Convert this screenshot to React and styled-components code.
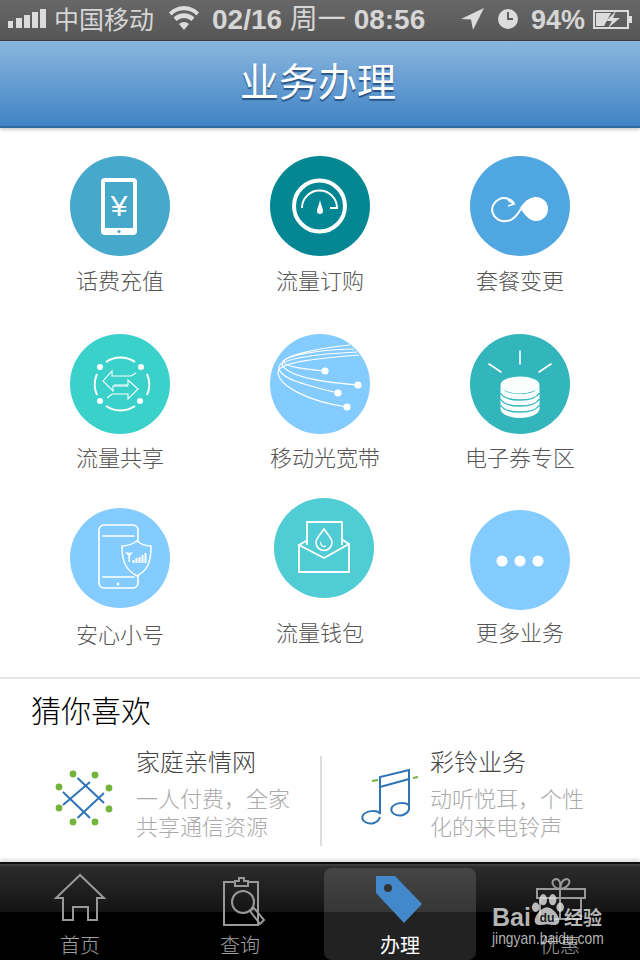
import React from "react";
import styled, { createGlobalStyle } from "styled-components";

const GlobalStyle = createGlobalStyle`
  html, body { margin: 0; padding: 0; background: #fff; }
  body { font-family: "Liberation Sans", "Noto Sans CJK SC", sans-serif; }
`;

const Phone = styled.div`
  width: 640px;
  height: 960px;
  display: flex;
  flex-direction: column;
  overflow: hidden;
  position: relative;
  background: #fff;
`;

const StatusBar = styled.div`
  height: 40px;
  flex: none;
  display: flex;
  align-items: center;
  box-sizing: border-box;
  padding-left: 8px;
  background: linear-gradient(#676767, #565656);
  color: #d6d6d6;
  font-size: 26px;
  white-space: nowrap;
`;

const StatusText = styled.span`
  margin-left: ${(p) => p.$left || 0}px;
  width: ${(p) => p.$width}px;
  font-size: ${(p) => p.$size || 25}px;
  font-weight: ${(p) => p.$weight || 400};
  line-height: 40px;
`;

const StatusWeekday = styled.span`
  font-weight: 400;
`;

const StatusIcon = styled.svg`
  flex: none;
  margin-left: ${(p) => p.$left || 0}px;
  fill: #dcdcdc;
`;

const Header = styled.header`
  height: 88px;
  flex: none;
  box-sizing: border-box;
  display: flex;
  align-items: center;
  justify-content: center;
  padding: 0 4px 2px 0;
  background: linear-gradient(#8ab6de, #4083c5);
  border-top: 1px solid #3d3d3d;
  border-bottom: 2px solid #2f6aa3;
  box-shadow: 0 2px 3px rgba(0, 0, 0, 0.2);
  position: relative;
  color: #fff;
  font-size: 39px;
  line-height: 46px;
  text-shadow: 0 2px 1px rgba(20, 60, 110, 0.75);
`;

const Services = styled.section`
  display: grid;
  grid-template-columns: 200px 200px 200px;
  grid-template-rows: 178px 178px 193px;
  padding: 0 20px;
  flex: none;
`;

const Service = styled.div`
  display: flex;
  flex-direction: column;
  align-items: center;
  padding-top: ${(p) => p.$top}px;
`;

const Disc = styled.svg`
  width: 100px;
  height: 100px;
  flex: none;
  margin-left: ${(p) => p.$shift || 0}px;
`;

const ServiceName = styled.div`
  margin-top: ${(p) => p.$gap}px;
  margin-left: ${(p) => p.$shift || 0}px;
  font-size: 22px;
  font-weight: 300;
  line-height: 30px;
  color: #555;
`;

const Recommend = styled.section`
  flex: 1;
  border-top: 2px solid #e6e6e6;
`;

const RecommendTitle = styled.h2`
  margin: 13px 0 0 31px;
  font-size: 30px;
  line-height: 40px;
  font-weight: 300;
  color: #000;
`;

const RecommendRow = styled.div`
  display: grid;
  grid-template-columns: 320px 2px 1fr;
  margin-top: 17px;
`;

const Pick = styled.div`
  display: flex;
`;

const PickIcon = styled.svg`
  flex: none;
  width: ${(p) => p.$width}px;
  height: 100px;
`;

const PickTitle = styled.div`
  font-size: 24px;
  font-weight: 300;
  line-height: 28px;
  color: #444;
`;

const PickDesc = styled.div`
  margin-top: 9px;
  width: 156px;
  font-size: 22px;
  font-weight: 300;
  line-height: 28px;
  color: #aaa;
`;

const PickDivider = styled.div`
  margin-top: 7px;
  height: 90px;
  background: #ddd;
`;

const TabBar = styled.nav`
  height: 98px;
  flex: none;
  box-sizing: border-box;
  display: grid;
  grid-template-columns: repeat(4, 160px);
  border-top: 2px solid #0c0c0c;
  box-shadow: 0 -3px 3px rgba(0, 0, 0, 0.12);
  background: linear-gradient(#454545 0, #2b2b2b 3px, #141414 48px, #000 48px);
  position: relative;
`;

const Tab = styled.div`
  display: flex;
  flex-direction: column;
  align-items: center;
  margin: 4px 4px 4px;
  border-radius: 8px;
  background: ${(p) =>
    p.$active ? "linear-gradient(#454545 0, #363636 44px, #222 44px)" : "transparent"};
`;

const TabIcon = styled.svg`
  width: 152px;
  height: 60px;
  flex: none;
  fill: none;
  stroke: #999;
  stroke-width: 2;
`;

const TabLabel = styled.span`
  font-size: 20px;
  font-weight: ${(p) => (p.$active ? 400 : 300)};
  line-height: 28px;
  margin-top: 4px;
  color: ${(p) => (p.$active ? "#fff" : "#a0a0a0")};
`;

const Watermark = styled.div`
  position: absolute;
  left: 490px;
  top: 893px;
  width: 120px;
  height: 60px;
  color: rgba(222, 222, 222, 0.82);
`;

const WatermarkLogo = styled.div`
  display: flex;
  align-items: center;
  height: 36px;
`;

const WatermarkBai = styled.span`
  margin: 11px 0 0 2px;
  width: 38px;
  font-size: 25px;
  font-weight: 700;
  line-height: 30px;
`;

const WatermarkCn = styled.span`
  margin: 15px 0 0 0;
  font-size: 19px;
  font-weight: 700;
  line-height: 26px;
`;

const WatermarkUrl = styled.div`
  margin: 0 0 0 2px;
  font-size: 17px;
  line-height: 20px;
  white-space: nowrap;
  transform: scaleX(0.815);
  transform-origin: left center;
`;

const Line = (props) => <line fill="none" stroke="#fff" strokeLinecap="round" {...props} />;
const Curve = (props) => <path fill="none" stroke="#fff" {...props} />;

const TopUp = () => (
  <>
    <rect x="31" y="22" width="36" height="57" rx="4" fill="#fff" />
    <rect x="35" y="26" width="28" height="46" fill="#46a9cb" />
    <circle cx="49" cy="75.5" r="1.6" fill="#46a9cb" />
    <text x="49" y="59.5" textAnchor="middle" fontSize="30" fill="#fff" fontFamily="Liberation Sans">¥</text>
  </>
);

const Gauge = () => (
  <>
    <circle cx="49.5" cy="50" r="25.5" fill="none" stroke="#fff" strokeWidth="4" />
    <Curve d="M32 52 A17.5 17.5 0 0 1 67 52 H60" strokeWidth="2" />
    <path d="M50 44 C51 49 53 52 53 55 A3 3 0 0 1 47 55 C47 52 49 49 50 44Z" fill="#fff" />
  </>
);

const Infinity_ = () => (
  <>
    <Curve d="M44 47 A12 11.5 0 1 0 36 65 C43 65 47 59 51 53" strokeWidth="2" />
    <Curve d="M38 44 L44 48 L38 50" strokeWidth="1.6" />
    <path d="M50 52 C54 46 59 41 66 41 A12 12 0 0 1 66 65 C59 65 54 58 50 52Z" fill="#fff" />
  </>
);

const Share = () => (
  <>
    <Curve d="M36 28 A26 26 0 0 1 65 28" strokeWidth="2" />
    <Curve d="M36 72 A26 26 0 0 0 65 72" strokeWidth="2" />
    <Curve d="M27 40 A26 26 0 0 0 27 61" strokeWidth="2" />
    <Curve d="M77 40 A26 26 0 0 1 77 61" strokeWidth="2" />
    <circle cx="30" cy="33" r="3" fill="#fff" />
    <circle cx="71" cy="33" r="3" fill="#fff" />
    <circle cx="30" cy="67" r="3" fill="#fff" />
    <circle cx="70" cy="67" r="3" fill="#fff" />
    <Curve d="M66 39 L61 42 H42 V37 L33 47 L43 57 V52 H58" strokeWidth="1.1" />
    <Curve d="M37 64 L42 60 H58 V65 L68 55 L58 46 V51 H44" strokeWidth="1.1" />
  </>
);

const Fiber = () => (
  <>
    <Curve d="M55 37 C35 35 15 33 14 28 C13 23 40 15 80 11" strokeWidth="1.2" />
    <Curve d="M88 51 C50 48 16 42 12 30 C11 22 45 16 84 15" strokeWidth="1.2" />
    <Curve d="M68 59 C40 52 8 45 9 33 C10 25 45 20 87 18" strokeWidth="1.2" />
    <Curve d="M77 73 C40 68 8 52 8 38 C8 28 50 24 89 21" strokeWidth="1.2" />
    <circle cx="55" cy="37" r="3.6" fill="#fff" />
    <circle cx="88" cy="51" r="3.6" fill="#fff" />
    <circle cx="68" cy="59" r="3.6" fill="#fff" />
    <circle cx="77" cy="73" r="3.6" fill="#fff" />
  </>
);

const Coins = () => (
  <>
    <Line x1="50" y1="17" x2="50" y2="30" strokeWidth="1.6" />
    <Line x1="19" y1="30" x2="31" y2="38" strokeWidth="1.6" />
    <Line x1="81" y1="30" x2="69" y2="38" strokeWidth="1.6" />
    <ellipse cx="50" cy="51" rx="19.5" ry="8.5" fill="#fafffd" />
    <path d="M30.5 52 V75 C30.5 80 40 84 50 84 C60 84 69.5 80 69.5 75 V52 C66 58 60 60 50 60 C40 60 34 58 30.5 52Z" fill="#fafffd" />
    <Curve d="M30.5 59 C34 65 42 66 50 66 C58 66 66 65 69.5 59" stroke="#33b6bb" strokeWidth="1.4" />
    <Curve d="M30.5 65 C34 71 42 72 50 72 C58 72 66 71 69.5 65" stroke="#33b6bb" strokeWidth="1.4" />
    <Curve d="M30.5 71 C34 77 42 78 50 78 C58 78 66 77 69.5 71" stroke="#33b6bb" strokeWidth="1.4" />
  </>
);

const Shield = () => (
  <>
    <Curve d="M68 33 V22 A5 5 0 0 0 63 17 H34 A5 5 0 0 0 29 22 V75 A5 5 0 0 0 34 80 H63 A5 5 0 0 0 68 75 V67" strokeWidth="1.6" />
    <Line x1="33" y1="28" x2="64" y2="28" strokeWidth="1.6" />
    <Line x1="33" y1="69" x2="64" y2="69" strokeWidth="1.6" />
    <circle cx="48" cy="76" r="1.5" fill="#fff" />
    <path d="M67 33 C61 37 57 38 52 38 C52 54 56 62 67 68 C78 62 81 54 81 38 C76 38 72 37 67 33Z" fill="#84ccff" stroke="#fff" strokeWidth="1.5" />
    <path d="M55 44 C58 45 61 45 63 44 L60 48 V54 H58.5 V48Z" fill="#fff" />
    <rect x="62.5" y="52" width="2" height="3" fill="#fff" />
    <rect x="65.5" y="50" width="2" height="5" fill="#fff" />
    <rect x="68.5" y="49" width="2" height="6" fill="#fff" />
    <rect x="71.5" y="47" width="2" height="8" fill="#fff" />
    <rect x="74.5" y="45" width="2" height="10" fill="#fff" />
  </>
);

const Envelope = () => (
  <>
    <Curve d="M33 47 V24 H68 V47" strokeWidth="1.8" />
    <Curve d="M25 47 V74 H75 V46 L50 60 L25 47 L33 42.5 M68 41.5 L75 46" strokeWidth="1.8" />
    <Curve d="M50 31 C46 37 42 40 42 44.5 A8 8 0 0 0 58 44.5 C58 40 54 37 50 31Z" strokeWidth="1.6" />
    <Curve d="M46.5 44 A3.8 3.8 0 0 0 52 48" strokeWidth="1.3" />
  </>
);

const More = () => (
  <>
    <circle cx="32" cy="51" r="5.5" fill="#fff" />
    <circle cx="50" cy="51" r="5.5" fill="#fff" />
    <circle cx="68" cy="51" r="5.5" fill="#fff" />
  </>
);

const services = [
  { name: "话费充值", color: "#46a9cb", top: 28, gap: 11, Icon: TopUp },
  { name: "流量订购", color: "#048793", top: 28, gap: 11, Icon: Gauge },
  { name: "套餐变更", color: "#4fa6e0", top: 28, gap: 11, Icon: Infinity_ },
  { name: "流量共享", color: "#3ad1cb", top: 28, gap: 10, Icon: Share },
  { name: "移动光宽带", color: "#84ccff", top: 28, gap: 10, labelShift: 10, Icon: Fiber },
  { name: "电子券专区", color: "#33b6bb", top: 28, gap: 10, Icon: Coins },
  { name: "安心小号", color: "#84ccff", top: 24, gap: 13, Icon: Shield },
  { name: "流量钱包", color: "#50ccd5", top: 14, gap: 21, shift: 8, Icon: Envelope },
  { name: "更多业务", color: "#84ccff", top: 26, gap: 9, Icon: More },
];

export default function App() {
  return (
    <Phone lang="zh-CN">
      <GlobalStyle />
      <StatusBar>
        <StatusIcon width="38" height="40" viewBox="0 0 38 40" aria-hidden="true">
          <rect x="0" y="21" width="5" height="7" />
          <rect x="8" y="18" width="6" height="10" />
          <rect x="16" y="15" width="6" height="13" />
          <rect x="24" y="12" width="6" height="16" />
          <rect x="32" y="9" width="6" height="19" />
        </StatusIcon>
        <StatusText $left={8} $width={115}>中国移动</StatusText>
        <StatusIcon width="30" height="40" viewBox="0 0 30 40" aria-hidden="true">
          <path d="M15 30 L10 24 A7.5 7.5 0 0 1 20 24Z" />
          <path d="M7.5 21 L4.5 17.5 A15 15 0 0 1 25.5 17.5 L22.5 21 A11 11 0 0 0 7.5 21Z" />
          <path d="M2.6 15.4 L0 12.4 A21 21 0 0 1 30 12.4 L27.4 15.4 A17.5 17.5 0 0 0 2.6 15.4Z" />
        </StatusIcon>
        <StatusText $left={13} $width={249} $size={28} $weight={700}>
          02/16 <StatusWeekday>周一</StatusWeekday> 08:56
        </StatusText>
        <StatusIcon width="23" height="40" viewBox="0 0 23 40" aria-hidden="true">
          <path d="M23 8 L0 19 L10 19.5 L12 30Z" />
        </StatusIcon>
        <StatusIcon width="20" height="40" viewBox="0 0 20 40" $left={14} aria-hidden="true">
          <path fillRule="evenodd" d="M10 9 A10 10 0 1 1 10 29 A10 10 0 0 1 10 9Z M9 12 V20 H15 V18 H11 V12Z" />
        </StatusIcon>
        <StatusText $left={13} $width={62} $size={27} $weight={700}>94%</StatusText>
        <StatusIcon width="39" height="40" viewBox="0 0 39 40" aria-hidden="true">
          <path fillRule="evenodd" d="M0 10 H36 V29 H0Z M2 12 V27 H34 V12Z" />
          <rect x="36" y="16" width="3" height="7" />
          <path d="M3 13 H18 L11 26 H3Z" />
          <path d="M23 11 L13 21 H19 L15 28 L27 18 H20Z" />
        </StatusIcon>
      </StatusBar>

      <Header>业务办理</Header>

      <Services>
        {services.map(({ name, color, top, gap, shift, labelShift, Icon }) => (
          <Service key={name} $top={top}>
            <Disc viewBox="0 0 100 100" $shift={shift} aria-hidden="true">
              <circle cx="50" cy="50" r="50" fill={color} />
              <Icon />
            </Disc>
            <ServiceName $gap={gap} $shift={labelShift}>{name}</ServiceName>
          </Service>
        ))}
      </Services>

      <Recommend>
        <RecommendTitle>猜你喜欢</RecommendTitle>
        <RecommendRow>
          <Pick>
            <PickIcon $width={136} viewBox="0 749 136 100" aria-hidden="true">
              <g stroke="#2f75b5" strokeWidth="2" fill="none">
                <path d="M77.5 778 L104 803 M63 792 L90 818 M90 782 L63 805 M104 793 L77.5 818" />
              </g>
              <g fill="#72b53a">
                <circle cx="73" cy="774" r="3.4" />
                <circle cx="95" cy="775" r="3.4" />
                <circle cx="59" cy="787" r="3.4" />
                <circle cx="109" cy="788" r="3.4" />
                <circle cx="59" cy="808" r="3.4" />
                <circle cx="109" cy="809" r="3.4" />
                <circle cx="73" cy="822" r="3.4" />
                <circle cx="95" cy="822" r="3.4" />
              </g>
            </PickIcon>
            <div>
              <PickTitle>家庭亲情网</PickTitle>
              <PickDesc>一人付费，全家共享通信资源</PickDesc>
            </div>
          </Pick>
          <PickDivider />
          <Pick>
            <PickIcon $width={108} viewBox="322 749 108 100" aria-hidden="true">
              <g stroke="#2f75b5" strokeWidth="2" fill="none">
                <path d="M380 814 V777 L409 770 V810 M380 787 L409 779" />
                <path d="M380 814 C378 810 367 810 363 815 C360 821 368 825 374 823 C377 822 379 820 380 817" />
                <path d="M409 806 C407 802 396 802 392 807 C389 813 397 817 403 815 C406 814 408 812 409 810" />
              </g>
              <path d="M372 781 L378 780 M413 778 L418 777" stroke="#72b53a" strokeWidth="2" />
            </PickIcon>
            <div>
              <PickTitle>彩铃业务</PickTitle>
              <PickDesc>动听悦耳，个性化的来电铃声</PickDesc>
            </div>
          </Pick>
        </RecommendRow>
      </Recommend>

      <TabBar>
        <Tab>
          <TabIcon viewBox="4 868 152 60" aria-hidden="true">
            <path d="M80 875 L56 898 H63 V920 H73 V907 H88 V920 H97 V898 H104Z" />
          </TabIcon>
          <TabLabel>首页</TabLabel>
        </Tab>
        <Tab>
          <TabIcon viewBox="164 868 152 60" aria-hidden="true">
            <path d="M235 882 H224 V925 H258 V882 H248 M235 886 V881 H239 V878 H244 V881 H248 V886Z" />
            <circle cx="243" cy="902" r="11" />
            <path d="M250 911 L254 908 L264 920 L260 924Z" />
          </TabIcon>
          <TabLabel>查询</TabLabel>
        </Tab>
        <Tab $active>
          <TabIcon viewBox="324 868 152 60" aria-hidden="true">
            <path d="M376 876 H395 L422 904 L404 923 L376 893Z" fill="#4488cc" stroke="none" />
            <circle cx="388" cy="888" r="4" fill="#333" stroke="none" />
          </TabIcon>
          <TabLabel $active>办理</TabLabel>
        </Tab>
        <Tab>
          <TabIcon viewBox="484 868 152 60" aria-hidden="true">
            <path d="M537 889 H585 V898 H537Z M540 898 V919 H581 V898 M560 889 V919" />
            <path d="M560 889 C552 888 550 880 556 879 C560 879 561 884 560 889 C561 884 562 879 567 879 C572 880 569 888 560 889Z" />
          </TabIcon>
          <TabLabel>优惠</TabLabel>
        </Tab>
      </TabBar>

      <Watermark>
        <WatermarkLogo>
          <WatermarkBai>Bai</WatermarkBai>
          <svg width="34" height="34" viewBox="0 0 36 36" fill="currentColor" aria-hidden="true">
            <ellipse cx="6" cy="14" rx="4" ry="5" />
            <ellipse cx="14" cy="6" rx="4" ry="6" />
            <ellipse cx="24" cy="6" rx="4" ry="6" />
            <ellipse cx="32" cy="14" rx="4" ry="5" />
            <path d="M18 14 C24 14 32 24 31 29 C30 34 24 33 18 32 C12 33 6 34 5 29 C4 24 12 14 18 14Z" />
            <text x="18" y="30" textAnchor="middle" fontSize="13" fontWeight="700" fill="#222" fontFamily="Liberation Sans">du</text>
          </svg>
          <WatermarkCn>经验</WatermarkCn>
        </WatermarkLogo>
        <WatermarkUrl>jingyan.baidu.com</WatermarkUrl>
      </Watermark>
    </Phone>
  );
}
